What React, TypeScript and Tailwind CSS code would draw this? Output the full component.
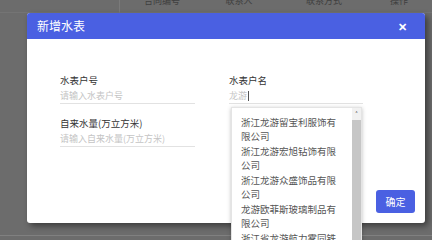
const companies = [
  '浙江龙游留宝利服饰有限公司',
  '浙江龙游宏旭钻饰有限公司',
  '浙江龙游众盛饰品有限公司',
  '龙游欧菲斯玻璃制品有限公司',
  '浙江省龙游航力雾同铁有限公司',
]

function Field({ label, placeholder }: { label: string; placeholder: string }) {
  return (
    <div className="flex flex-col">
      <div className="h-[13px] text-[9.5px] leading-[13px] text-[#333]">{label}</div>
      <div className="mt-[1px] h-[16px] border-b border-[#e2e2e2] text-[9px] leading-[15px] text-[#c4c4c4]">
        {placeholder}
      </div>
    </div>
  )
}

function App() {
  return (
    <div
      className="relative h-[240px] w-[432px] overflow-hidden bg-[#6c6c6c]"
      style={{ fontFamily: '"Noto Sans CJK SC", "Noto Sans", sans-serif' }}
    >
      {/* page behind the overlay */}
      <div className="flex h-[13px] items-start border-b border-[#747474] text-[9px] leading-[10px] text-[#3f3f3f]">
        <div className="h-[13px] w-[120px] border-r border-[#7a7a7a]" />
        <div className="-mt-[4px] w-[84px] text-center">合同编号</div>
        <div className="-mt-[4px] w-[70px] text-center">联系人</div>
        <div className="-mt-[4px] w-[100px] text-center">联系方式</div>
        <div className="-mt-[4px] w-[50px] text-center">操作</div>
      </div>
      <div className="mt-[222px] border-t border-[#808080]" />

      {/* dialog */}
      <div className="absolute left-[27px] top-[13px] flex h-[210px] w-[398px] flex-col rounded-[3px] bg-white shadow-[3px_3px_6px_rgba(0,0,0,0.45)]">
        <div className="flex h-[26px] items-center justify-between rounded-t-[3px] bg-[#4a60e2] pl-[10px] pr-[18px]">
          <span className="text-[12px] text-white">新增水表</span>
          <span className="text-[11px] font-bold leading-none text-white">✕</span>
        </div>
        <div className="flex flex-1 flex-col">
          <div className="grid grid-cols-[135px_134px] gap-x-[34px] pl-[33px] pt-[35px]">
            <div className="flex flex-col gap-[13px]">
              <Field label="水表户号" placeholder="请输入水表户号" />
              <Field label="自来水量(万立方米)" placeholder="请输入自来水量(万立方米)" />
            </div>
            <div className="relative flex flex-col">
              <div className="h-[13px] text-[9.5px] leading-[13px] text-[#333]">水表户名</div>
              <div className="mt-[1px] flex h-[16px] items-center border-b border-[#e2e2e2] text-[9px] leading-[15px] text-[#c4c4c4]">
                龙游<span className="ml-[1px] h-[10px] w-px bg-[#555]" />
              </div>
              <div className="absolute left-[2px] top-[33px] z-10 flex h-[140px] w-[131px] overflow-hidden border border-[#e4e4e4] bg-white shadow-[0_1px_4px_rgba(0,0,0,0.25)]">
                <div className="flex flex-1 flex-col gap-[1px] pl-[9px] pr-[10px] pt-[7px] text-[9.5px] leading-[14px] text-[#555]">
                  {companies.map((c) => (
                    <div key={c} className="w-[100px]">{c}</div>
                  ))}
                </div>
                <div className="flex w-[9px] flex-col bg-[#c6c6c6]">
                  <div className="flex h-[12px] items-center justify-center bg-[#f1f1f1] text-[7px] font-bold text-[#555]">
                    ˄
                  </div>
                </div>
              </div>
            </div>
          </div>
          <div className="mt-auto flex justify-end pb-[10px] pr-[10px]">
            <button className="h-[23px] w-[39px] rounded-[3px] bg-[#4a60e2] text-[10px] text-white">确定</button>
          </div>
        </div>
      </div>
    </div>
  )
}

export default App
